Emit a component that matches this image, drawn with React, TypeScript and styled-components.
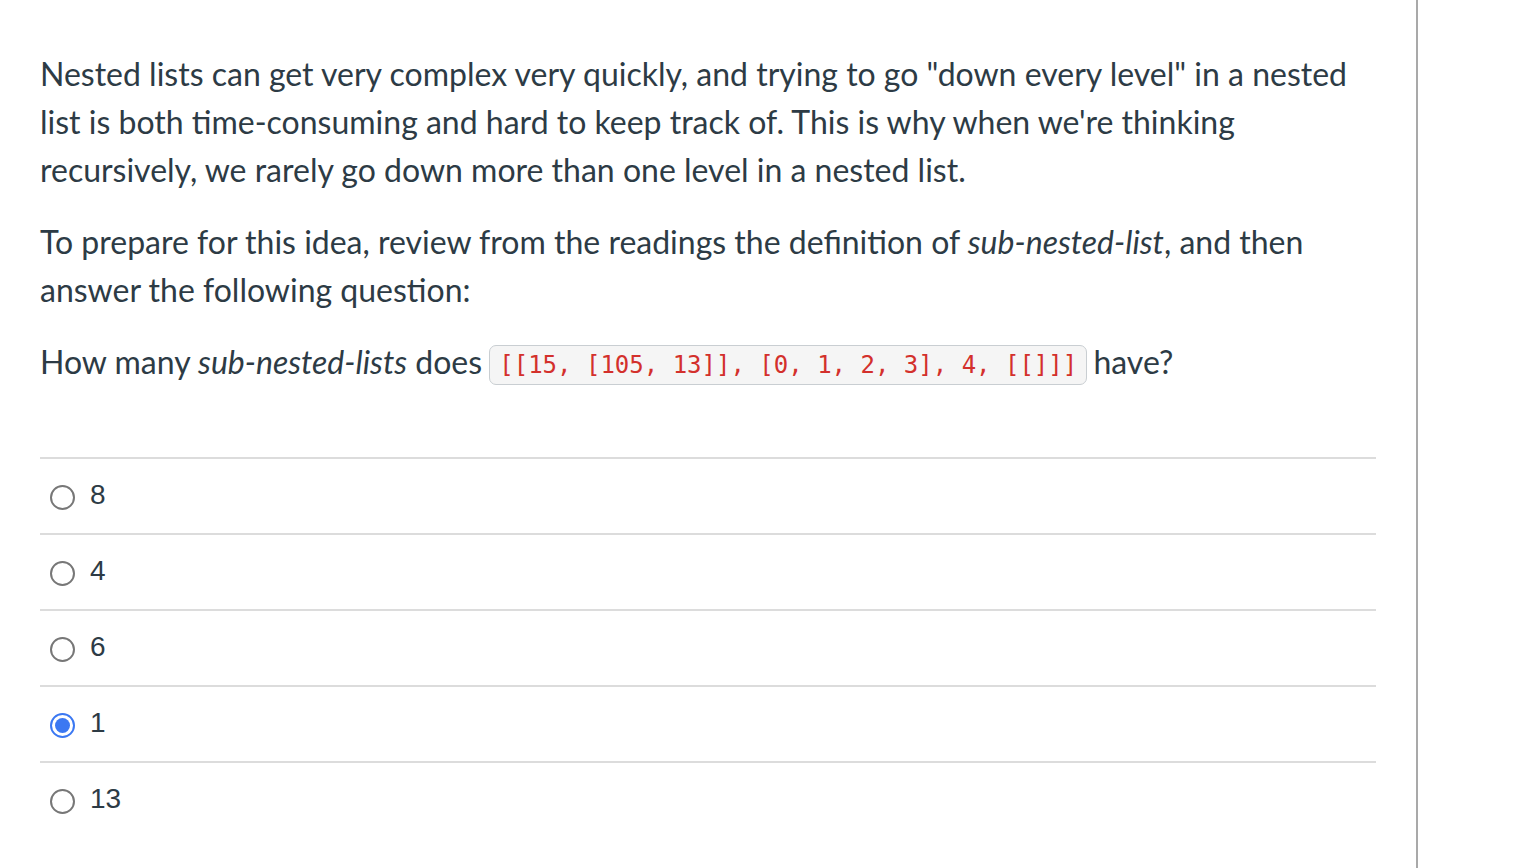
import React from "react";
import styled, { createGlobalStyle } from "styled-components";

const Global = createGlobalStyle`
  html, body { margin: 0; padding: 0; background: #fff; }
  body { font-family: Lato, "Noto Sans", sans-serif; color: #2d3b45; }
`;

const Page = styled.div`
  display: flex;
  min-height: 868px;
`;

const Main = styled.main`
  width: 1336px;
  padding: 50px 40px 0 40px;
  border-right: 2px solid #a9a9a9;
  box-sizing: content-box;
`;

const Para = styled.p`
  margin: 0 0 24px 0;
  font-size: 32px;
  line-height: 48px;
  letter-spacing: 0;
`;

const Code = styled.code`
  display: inline-block;
  font-family: "DejaVu Sans Mono", monospace;
  font-size: 24px;
  line-height: 38px;
  color: #d3302c;
  background: #f5f5f5;
  border: 1px solid #c9ced2;
  border-radius: 7px;
  padding: 0 9px;
  vertical-align: middle;
  margin: -2px -2px 0 -1px;
`;

const Answers = styled.div`
  margin-top: 71px;
  display: flex;
  flex-direction: column;
`;

const Row = styled.label`
  display: flex;
  align-items: center;
  height: 76px;
  border-top: 2px solid #dcdcdc;
  box-sizing: border-box;
  padding: 0 0 2px 10px;
  gap: 15px;
  font-family: "Liberation Sans", Arial, sans-serif;
  font-size: 28px;
`;

const Radio = styled.span<{ $checked?: boolean }>`
  width: 25px;
  height: 25px;
  border-radius: 50%;
  box-sizing: border-box;
  border: 2px solid ${(p) => (p.$checked ? "#3b78f2" : "#777")};
  display: flex;
  align-items: center;
  justify-content: center;
  margin-top: 4px;
  &::after {
    content: "";
    width: 15px;
    height: 15px;
    border-radius: 50%;
    background: ${(p) => (p.$checked ? "#3b78f2" : "transparent")};
  }
`;

const answers = [
  { v: "8" },
  { v: "4" },
  { v: "6" },
  { v: "1", checked: true },
  { v: "13" },
];

export default function App() {
  return (
    <Page>
      <Global />
      <Main>
        <Para>
          Nested lists can get very complex very quickly, and trying to go "down every level" in a nested
          list is both time-consuming and hard to keep track of. This is why when we're thinking
          recursively, we rarely go down more than one level in a nested list.
        </Para>
        <Para>
          To prepare for this idea, review from the readings the definition of <em>sub-nested-list</em>, and then
          answer the following question:
        </Para>
        <Para>
          How many <em>sub-nested-lists</em> does <Code>[[15, [105, 13]], [0, 1, 2, 3], 4, [[]]]</Code> have?
        </Para>
        <Answers>
          {answers.map((a) => (
            <Row key={a.v}>
              <Radio $checked={a.checked} />
              <span>{a.v}</span>
            </Row>
          ))}
        </Answers>
      </Main>
    </Page>
  );
}
